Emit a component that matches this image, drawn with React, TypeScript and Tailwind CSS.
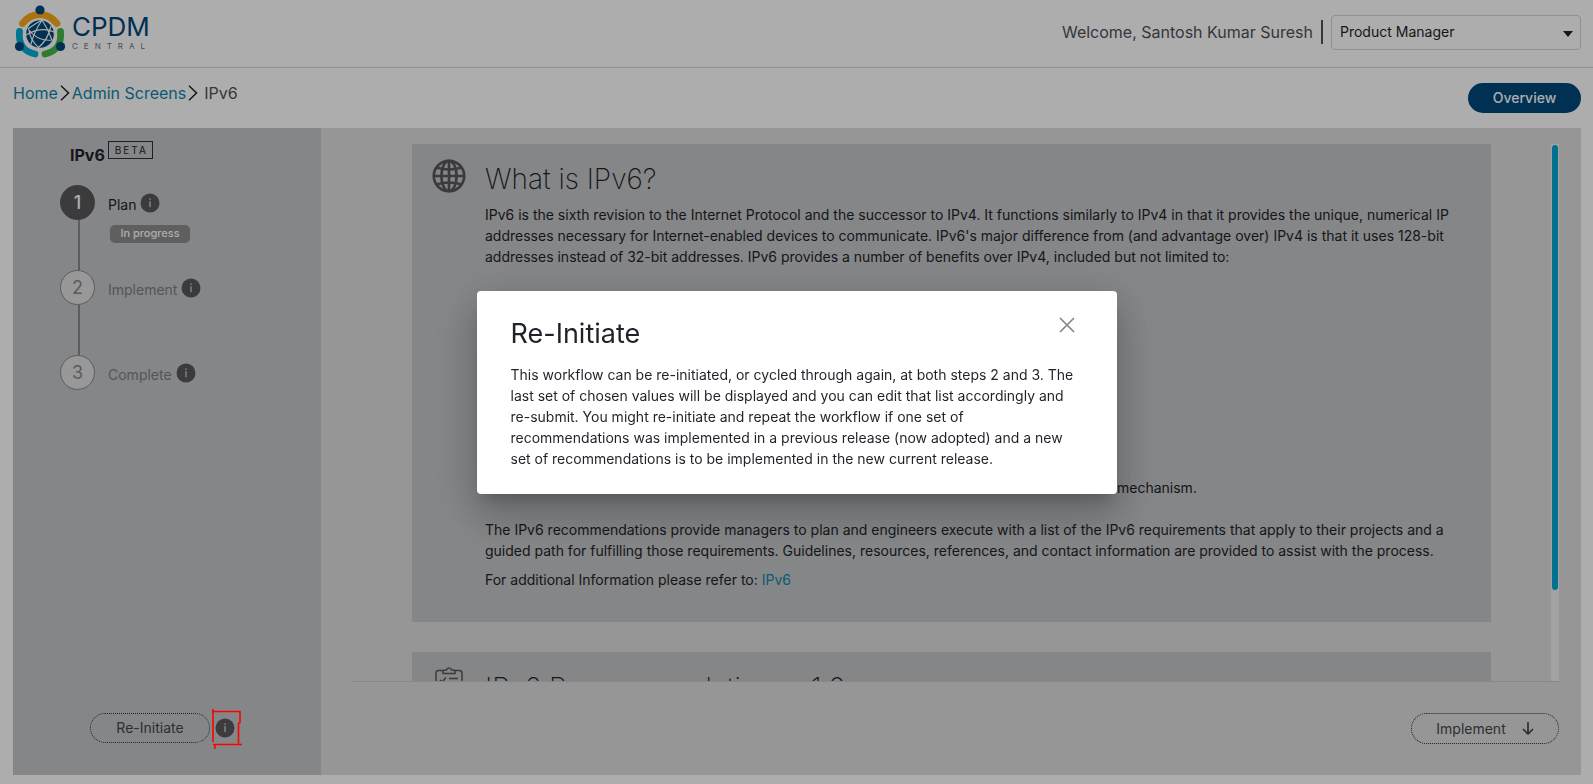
import React from "react";

function Info() {
  return (
    <svg viewBox="0 0 20 20" className="size-5 shrink-0" aria-hidden="true">
      <circle cx="10" cy="10" r="9.5" fill="#58585b" />
      <rect x="9.3" y="8.2" width="1.4" height="6" fill="#c4c7ca" />
      <rect x="9.3" y="5.4" width="1.4" height="1.5" fill="#c4c7ca" />
    </svg>
  );
}

function InfoButton({ label }: { label: string }) {
  return (
    <button type="button" aria-label={label} className="size-5 shrink-0">
      <Info />
    </button>
  );
}

function Logo() {
  return (
    <div className="flex items-center gap-1.5">
      <svg viewBox="0 0 52 54" className="h-[54px] w-[52px]" aria-hidden="true">
        <g fill="none" strokeWidth="6.8" strokeLinecap="round">
          <path d="M8.500 18.500 C13 12.500 19 9.500 26 9.500 S38 12.500 43 18.500" stroke="#fba81a" />
          <path d="M5.500 26.500 C4 40 11 47 21 49" stroke="#00aed6" />
          <path d="M46.500 26.500 C48 40 41 47 31 49" stroke="#44b649" />
        </g>
        <circle cx="26" cy="29" r="13.8" fill="#00477a" />
        <g fill="none" stroke="#fff" strokeWidth="1.2">
          <path d="M14 24 Q22 18 28 15 M28 15 Q34 24 38 35 M14 24 Q24 37 38 35 M17 39 Q20 27 28 15 M12 30 Q27 21 40 27 M24 43 Q34 35 37 21 M15 25 Q16 35 25 43" />
        </g>
        <g fill="#00477a">
          <circle cx="26" cy="5" r="4.600" />
          <circle cx="5.500" cy="41.500" r="4.600" />
          <circle cx="46.500" cy="41.500" r="4.600" />
        </g>
      </svg>
      <div className="flex flex-col text-[#00477a]">
        <span className="text-[26px] leading-7">CPDM</span>
        <span className="text-[8px] leading-[10px] tracking-[6px] text-[#6b7580]">CENTRAL</span>
      </div>
    </div>
  );
}

function Crumb() {
  return (
    <svg viewBox="0 0 10 16" className="h-4 w-[10px]" fill="none" stroke="#222" strokeWidth="1.5" aria-hidden="true">
      <path d="M1 .8 8.500 8 1 15.200" />
    </svg>
  );
}

function Globe() {
  return (
    <svg viewBox="0 0 34 34" className="size-[34px] shrink-0" fill="none" stroke="#58585b" strokeWidth="2.700" aria-hidden="true">
      <circle cx="17" cy="17" r="15.200" />
      <ellipse cx="17" cy="17" rx="7.600" ry="15.200" />
      <path d="M17 1v32M1 17h32M4.500 8.500q12.500 4 25 0M4.500 25.500q12.500-4 25 0" />
    </svg>
  );
}

function Clipboard() {
  return (
    <svg viewBox="0 0 28 34" className="h-[34px] w-7 shrink-0" fill="none" stroke="#58585b" strokeWidth="1.500" aria-hidden="true">
      <path d="M8 3.500H3.500Q1 3.500 1 6v24q0 2.500 2.500 2.500h21Q27 32.500 27 30V6q0-2.500-2.500-2.500H20" />
      <path d="M8 6.500V4.500Q8 3 10 3h1.500Q12 1 14 1t2.500 2H18q2 0 2 1.500v2z" />
      <path d="m5 13 2 2 4-4.500M14 11.500h9M14 15h4M19.500 15h2M5 21l2 2 4-4.500M14 20h9M14 23.500h6" />
    </svg>
  );
}

const steps = [
  { n: 1, name: "Plan", active: true },
  { n: 2, name: "Implement", active: false },
  { n: 3, name: "Complete", active: false },
];

export default function App() {
  return (
    <div className="flex h-screen flex-col bg-white font-['Inter',sans-serif] text-sm text-[#1f2329]">
      <header className="flex h-[68px] shrink-0 items-center justify-between border-b border-[#d4d4d4] pr-3 pb-[3px] pl-[14px]">
        <Logo />
        <div className="flex items-center gap-2">
          <span className="text-base text-[#4c5259]">Welcome, Santosh Kumar Suresh</span>
          <span className="h-6 w-0.5 bg-[#4c5259]" />
          <div className="relative">
            <select
              aria-label="Role"
              className="h-[35px] w-[250px] appearance-none rounded-sm border border-[#d4d4d4] bg-white pl-2 text-sm"
            >
              <option>Product Manager</option>
            </select>
            <svg viewBox="0 0 10 6" className="pointer-events-none absolute top-4 right-2 h-[6px] w-[10px]" aria-hidden="true">
              <path d="M0 0h10L5 6z" fill="#1f2329" />
            </svg>
          </div>
        </div>
      </header>

      <div className="flex h-[60px] shrink-0 justify-between pt-[14px] pr-3 pl-[13px]">
        <nav aria-label="Breadcrumb" className="flex h-[22px] items-center gap-0.5 text-base">
          <a href="#home" className="text-[#0f86a8]">Home</a>
          <Crumb />
          <a href="#admin" className="text-[#0f86a8]">Admin Screens</a>
          <Crumb />
          <span className="pl-1 text-[#4c5259]">IPv6</span>
        </nav>
        <button type="button" className="mt-px h-[30px] w-[113px] rounded-full bg-[#00477a] font-medium text-white">
          Overview
        </button>
      </div>

      <div className="mr-3 mb-[9px] ml-[13px] flex min-h-0 flex-1">
        <aside className="flex w-[308px] shrink-0 flex-col justify-between bg-[#c4c6c8] pt-[13px] pb-8">
          <div>
            <div className="flex gap-[3px] pl-[57px]">
              <h2 className="pt-0.5 text-base font-bold">IPv6</h2>
              <span className="flex h-[18px] w-[45px] items-center justify-center border border-[#2c3036] pl-0.5 text-[10px] tracking-[2px]">
                BETA
              </span>
            </div>
            <ol className="mt-[18px] pl-[47px]">
              {steps.map((s) => (
                <li key={s.n} className="flex gap-[13px]">
                  <div className="flex flex-col items-center">
                    <span
                      className={
                        "flex size-[35px] items-center justify-center rounded-full border text-lg " +
                        (s.active
                          ? "border-[#58585b] bg-[#58585b] font-medium text-white"
                          : "border-[#85878a] bg-[#e0e1e2] text-[#85878a]")
                      }
                    >
                      {s.n}
                    </span>
                    {s.n < 3 && <span className="ml-0.5 h-[50px] w-0.5 bg-[#8a8a8c]" />}
                  </div>
                  <div className="pt-2">
                    <div className="flex gap-1">
                      <span className={"pt-[2px] " + (s.active ? "" : "text-[#7c7f82]")}>{s.name}</span>
                      <InfoButton label={"About " + s.name} />
                    </div>
                    {s.active && (
                      <span className="mt-[10px] ml-[2px] flex h-[18px] w-20 items-center justify-center rounded-[5px] bg-[#8d8d8d] text-[11px] font-medium text-white">
                        In progress
                      </span>
                    )}
                  </div>
                </li>
              ))}
            </ol>
          </div>
          <div className="flex items-center gap-[5px] pl-[77px]">
            <button type="button" className="h-[30px] w-[120px] rounded-full border border-dotted border-[#2c3036] text-[#40474f]">
              Re-Initiate
            </button>
            <div className="relative z-20 flex">
              <button type="button" aria-label="About Re-Initiate" className="size-5">
                <svg viewBox="0 0 20 20" className="size-5" aria-hidden="true">
                  <circle cx="10" cy="10" r="9.5" fill="#3c3c3e" />
                  <path d="M10 8v6M10 5.500v1.400" stroke="#858789" strokeWidth="1.400" />
                </svg>
              </button>
              <svg viewBox="0 0 32 42" className="absolute -top-[10px] -left-1 h-[42px] w-8" fill="none" stroke="#f00" strokeWidth="1.600" aria-hidden="true">
                <path d="M2 1v33M1 3.500h28v11l-1.500 1v20M2 36.500h29M4 37v4" />
              </svg>
            </div>
          </div>
        </aside>

        <main className="flex min-w-0 flex-1 flex-col bg-[#dedede] pt-4 pr-[22px] pl-[31px]">
          <div className="flex h-[538px] shrink-0 border-b border-[#c9c9c9]">
            <div className="min-w-0 flex-1 overflow-hidden px-[60px]">
              <section className="flex h-[478px] gap-[19px] bg-[#c4c6c8] pt-[15px] pr-9 pl-5">
                <Globe />
                <div className="leading-[21px]">
                  <h1 className="text-[28px] leading-10 font-extralight">What is IPv6?</h1>
                  <p className="mt-[5px]">
                    IPv6 is the sixth revision to the Internet Protocol and the successor to IPv4. It functions similarly to IPv4 in that it provides the unique, numerical IP addresses necessary for Internet-enabled devices to communicate. IPv6's major difference from (and advantage over) IPv4 is that it uses 128-bit addresses instead of 32-bit addresses. IPv6 provides a number of benefits over IPv4, included but not limited to:
                  </p>
                  <p className="mt-[210px] pl-[632px]">mechanism.</p>
                  <p className="mt-[21px]">
                    The IPv6 recommendations provide managers to plan and engineers execute with a list of the IPv6 requirements that apply to their projects and a guided path for fulfilling those requirements. Guidelines, resources, references, and contact information are provided to assist with the process.
                  </p>
                  <p className="mt-2">
                    For additional Information please refer to: <a href="#ipv6" className="text-[#0f86a8]">IPv6</a>
                  </p>
                </div>
              </section>
              <section className="mt-[30px] flex h-60 gap-[22px] bg-[#c4c6c8] pt-[15px] pl-[23px]">
                <Clipboard />
                <h2 className="text-[28px] leading-[42px] font-extralight">IPv6 Recommendations v1.0</h2>
              </section>
            </div>
            <div className="w-2 bg-[#f0f0f0] px-px pt-px">
              <div className="h-[445px] rounded-full bg-[#00a9d4]" />
            </div>
          </div>
          <div className="flex flex-1 items-center justify-end">
            <button type="button" className="flex h-[31px] w-[148px] items-center justify-center gap-4 rounded-full border border-dotted border-[#2c3036] text-[#40474f]">
              Implement
              <svg viewBox="0 0 12 13" className="h-[13px] w-3" fill="none" stroke="currentColor" strokeWidth="1.700" aria-hidden="true">
                <path d="M6 0v12M1 7l5 5 5-5" />
              </svg>
            </button>
          </div>
        </main>
      </div>

      <div className="fixed inset-0 z-10 flex items-center justify-center bg-black/32">
        <div
          role="dialog"
          aria-labelledby="dialog-title"
          className="w-[640px] rounded bg-white px-[34px] pt-6 pb-[25px] shadow-[0_11px_15px_-7px_rgba(0,0,0,.2),0_24px_38px_3px_rgba(0,0,0,.14),0_9px_46px_8px_rgba(0,0,0,.12)]"
        >
          <div className="flex justify-between pr-2">
            <h2 id="dialog-title" className="text-[27px] leading-[38px]">Re-Initiate</h2>
            <button type="button" aria-label="Close" className="flex h-5 w-4 items-center">
              <svg viewBox="0 0 16 16" className="size-4" stroke="#858585" strokeWidth="1.700" aria-hidden="true">
                <path d="m1 1 14 14M15 1 1 15" />
              </svg>
            </button>
          </div>
          <p className="mt-[11px] leading-[21px]">
            This workflow can be re-initiated, or cycled through again, at both steps 2 and 3. The last set of chosen values will be displayed and you can edit that list accordingly and re-submit. You might re-initiate and repeat the workflow if one set of recommendations was implemented in a previous release (now adopted) and a new set of recommendations is to be implemented in the new current release.
          </p>
        </div>
      </div>
    </div>
  );
}
